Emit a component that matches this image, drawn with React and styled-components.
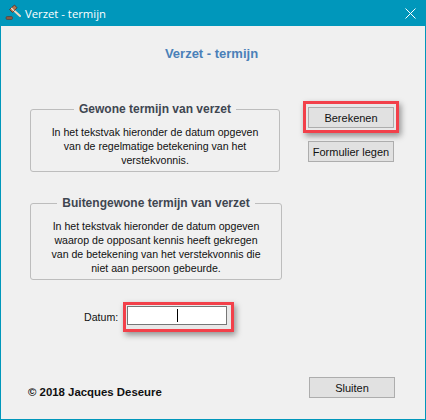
import styled, { createGlobalStyle } from 'styled-components';

const GlobalStyle = createGlobalStyle`
  html, body {
    margin: 0;
    padding: 0;
    background: #f0f0f0;
  }
  * {
    box-sizing: border-box;
  }
`;

const GavelIcon = () => (
  <svg width="16" height="18" viewBox="0 0 16 18">
    <rect x="1" y="12.5" width="6.5" height="3" rx="1.2" fill="#8a5a44" stroke="#4a3a34" strokeWidth="0.6" />
    <path d="M9 6.5 L15 12" stroke="#f0d8c0" strokeWidth="2" strokeLinecap="round" />
    <path d="M4.5 5.5 L9.5 1 L12 3.8 L7.5 8.5 Z" fill="#b5744e" stroke="#4a3028" strokeWidth="0.8" />
    <path d="M6.3 4 L9 6.8" stroke="#f3e3d3" strokeWidth="1.2" />
  </svg>
);

const CloseIcon = () => (
  <svg width="11" height="11" viewBox="0 0 11 11">
    <path d="M0.5 0.5 L10.5 10.5 M10.5 0.5 L0.5 10.5" stroke="#fff" strokeWidth="1" fill="none" />
  </svg>
);

export default function App() {
  return (
    <Window>
      <GlobalStyle />
      <TitleBar>
        <TitleLeft>
          <GavelIcon />
          <TitleText>Verzet - termijn</TitleText>
        </TitleLeft>
        <CloseIcon />
      </TitleBar>
      <Content>
        <Heading>Verzet - termijn</Heading>
        <Columns>
          <LeftColumn>
            <Group>
              <GroupTitle>Gewone termijn van verzet</GroupTitle>
              In het tekstvak hieronder de datum opgeven<br />
              van de regelmatige betekening van het<br />
              verstekvonnis.
            </Group>
            <Group wide>
              <GroupTitle>Buitengewone termijn van verzet</GroupTitle>
              In het tekstvak hieronder de datum opgeven<br />
              waarop de opposant kennis heeft gekregen<br />
              van de betekening van het verstekvonnis die<br />
              niet aan persoon gebeurde.
            </Group>
            <DateRow>
              <DateLabel>Datum:</DateLabel>
              <Highlight pad="1px 4px 4px 1px">
                <DateInput>
                  <Caret />
                </DateInput>
              </Highlight>
            </DateRow>
          </LeftColumn>
          <RightColumn>
            <Highlight pad="3px 2px 2px">
              <Button>Berekenen</Button>
            </Highlight>
            <Button>Formulier legen</Button>
          </RightColumn>
        </Columns>
        <Footer>
          <Copyright>© 2018 Jacques Deseure</Copyright>
          <Button>Sluiten</Button>
        </Footer>
      </Content>
    </Window>
  );
}

const Window = styled.div`
  width: 426px;
  height: 420px;
  display: flex;
  flex-direction: column;
  background: #f0f0f0;
  border: 1px solid #0097bb;
  border-top: none;
  font-family: "Liberation Sans", Arial, sans-serif;
  color: #111;
  overflow: hidden;
`;

const TitleBar = styled.div`
  height: 26px;
  flex: none;
  margin: 0 -1px;
  padding: 0 10px 0 5px;
  display: flex;
  align-items: center;
  justify-content: space-between;
  background: #0097bb;
`;

const TitleLeft = styled.div`
  display: flex;
  align-items: center;
  gap: 4px;
`;

const TitleText = styled.span`
  font-family: "Open Sans", "Noto Sans", sans-serif;
  font-size: 11.3px;
  color: #fff;
`;

const Content = styled.div`
  flex: 1;
  display: flex;
  flex-direction: column;
  padding: 20px 30px 21px 27px;
`;

const Heading = styled.div`
  font-size: 13px;
  font-weight: bold;
  line-height: 16px;
  text-align: center;
  color: #4a80b8;
`;

const Columns = styled.div`
  margin-top: 39px;
  display: flex;
  align-items: flex-start;
  flex: 1;
`;

const LeftColumn = styled.div`
  display: flex;
  flex-direction: column;
  width: 254px;
`;

const RightColumn = styled.div`
  margin-left: 21px;
  display: flex;
  flex-direction: column;
  align-items: center;
  gap: 8px;
`;

const Group = styled.fieldset`
  margin: 0 0 23px 2px;
  padding: 4px 4px 4px;
  width: ${props => (props.wide ? '252px' : '250px')};
  border: 1px solid #bdbdbd;
  border-radius: 3px;
  font-size: 10.6px;
  line-height: 14px;
  text-align: center;
  color: #111;
`;

const GroupTitle = styled.legend`
  margin: 0 auto 4px;
  padding: 0 5px;
  font-size: 12px;
  font-weight: bold;
  line-height: 16px;
  color: #3f4650;
`;

const Highlight = styled.div`
  display: inline-flex;
  padding: ${props => props.pad};
  border: 3px solid #f2404a;
  box-shadow: 2px 3px 6px rgba(0, 0, 0, 0.4);
  background: #e8e8e8;
`;

const Button = styled.button`
  width: 86px;
  height: 21px;
  padding: 0;
  border: 1px solid #adadad;
  background: #e1e1e1;
  font-family: "Liberation Sans", Arial, sans-serif;
  font-size: 11px;
  color: #111;
`;

const DateRow = styled.div`
  display: flex;
  align-items: center;
  margin-left: 56px;
  margin-top: -1px;
`;

const DateLabel = styled.span`
  width: 39px;
  font-size: 10.6px;
`;

const DateInput = styled.div`
  width: 100px;
  height: 19px;
  display: flex;
  align-items: center;
  justify-content: center;
  background: #fff;
  border: 1px solid #767676;
`;

const Caret = styled.div`
  width: 1px;
  height: 13px;
  background: #000;
`;

const Footer = styled.div`
  display: flex;
  align-items: center;
  justify-content: space-between;
`;

const Copyright = styled.div`
  margin-top: 9px;
  font-size: 11.4px;
  font-weight: bold;
  color: #111;
`;
